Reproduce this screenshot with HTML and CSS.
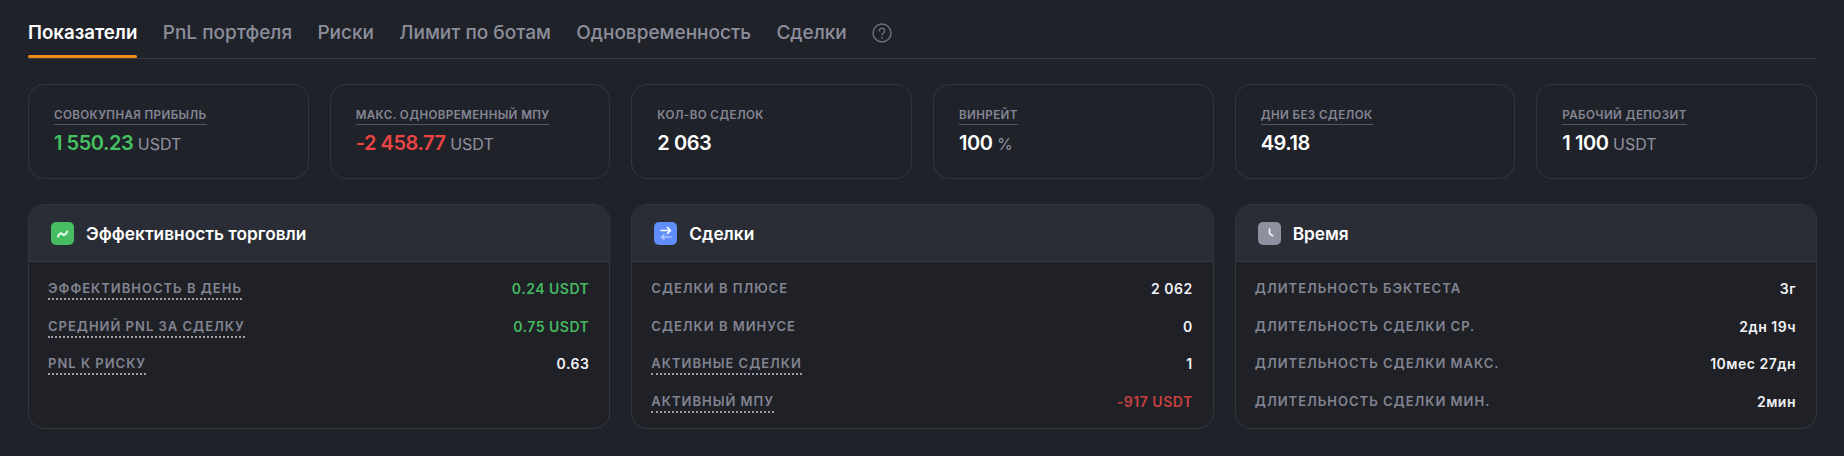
FILE: index.html
```html
<!DOCTYPE html>
<html lang="ru">
<head>
<meta charset="utf-8">
<title>Показатели</title>
<link rel="stylesheet" href="styles.css">
</head>
<body>
<main class="page">
  <nav class="tabs">
    <a class="tab active">Показатели</a>
    <a class="tab">PnL портфеля</a>
    <a class="tab">Риски</a>
    <a class="tab">Лимит по ботам</a>
    <a class="tab">Одновременность</a>
    <a class="tab">Сделки</a>
    <svg class="help" viewBox="0 0 20 20" width="20" height="20"><circle cx="10" cy="10" r="9" fill="none" stroke="#6f717c" stroke-width="1.4"/><path d="M7.4 7.8a2.6 2.6 0 1 1 4.2 2c-.9.7-1.6 1.1-1.6 2.3" fill="none" stroke="#6f717c" stroke-width="1.4" stroke-linecap="round"/><circle cx="10" cy="14.8" r=".9" fill="#6f717c"/></svg>
  </nav>

  <section class="kpis">
    <div class="kpi"><span class="kpi-label under">Совокупная прибыль</span><div class="kpi-value green">1 550.23 <small>USDT</small></div></div>
    <div class="kpi"><span class="kpi-label under">Макс. одновременный МПУ</span><div class="kpi-value red">-2 458.77 <small>USDT</small></div></div>
    <div class="kpi"><span class="kpi-label">Кол-во сделок</span><div class="kpi-value">2 063</div></div>
    <div class="kpi"><span class="kpi-label under">Винрейт</span><div class="kpi-value">100 <small>%</small></div></div>
    <div class="kpi"><span class="kpi-label under">Дни без сделок</span><div class="kpi-value">49.18</div></div>
    <div class="kpi"><span class="kpi-label under">Рабочий депозит</span><div class="kpi-value">1 100 <small>USDT</small></div></div>
  </section>

  <section class="panels">
    <article class="panel">
      <header class="panel-head">
        <span class="icon icon-green"><svg viewBox="0 0 23 23" width="23" height="23"><path d="M7 14.500c1.700-3.400 3-4 4.300-2.500s2.800 1.500 4.900-2.500" fill="none" stroke="#eafaec" stroke-width="2" stroke-linecap="round"/></svg></span>
        <h2>Эффективность торговли</h2>
      </header>
      <div class="rows">
        <div class="row"><span class="label dotted">Эффективность в день</span><span class="val green">0.24 USDT</span></div>
        <div class="row"><span class="label dotted">Средний PnL за сделку</span><span class="val green">0.75 USDT</span></div>
        <div class="row"><span class="label dotted">PnL к риску</span><span class="val">0.63</span></div>
      </div>
    </article>
    <article class="panel">
      <header class="panel-head">
        <span class="icon icon-blue"><svg viewBox="0 0 23 23" width="23" height="23"><path d="M7 8.500h9.500M13.500 5.500l3 3-3 3" fill="none" stroke="#fff" stroke-width="1.700" stroke-linecap="round" stroke-linejoin="round"/><path d="M17 15H7.500M10 12.800L7.500 15l2.500 2.200" fill="none" stroke="#a9c1fd" stroke-width="1.700" stroke-linecap="round" stroke-linejoin="round"/></svg></span>
        <h2>Сделки</h2>
      </header>
      <div class="rows">
        <div class="row"><span class="label">Сделки в плюсе</span><span class="val">2 062</span></div>
        <div class="row"><span class="label">Сделки в минусе</span><span class="val">0</span></div>
        <div class="row"><span class="label dotted">Активные сделки</span><span class="val">1</span></div>
        <div class="row"><span class="label dotted">Активный МПУ</span><span class="val red-soft">-917 USDT</span></div>
      </div>
    </article>
    <article class="panel">
      <header class="panel-head">
        <span class="icon icon-gray"><svg viewBox="0 0 23 23" width="23" height="23"><path d="M11.500 7v3.500c0 1.300 1.300 2.500 3.300 3.300" fill="none" stroke="#f2f2f5" stroke-width="1.700" stroke-linecap="round" stroke-linejoin="round"/></svg></span>
        <h2>Время</h2>
      </header>
      <div class="rows">
        <div class="row"><span class="label">Длительность бэктеста</span><span class="val">3г</span></div>
        <div class="row"><span class="label">Длительность сделки ср.</span><span class="val">2дн 19ч</span></div>
        <div class="row"><span class="label">Длительность сделки макс.</span><span class="val">10мес 27дн</span></div>
        <div class="row"><span class="label">Длительность сделки мин.</span><span class="val">2мин</span></div>
      </div>
    </article>
  </section>
</main>
</body>
</html>
```

FILE: styles.css
```css
* { box-sizing: border-box; }

html, body {
  margin: 0;
  height: 100%;
  background: #20222a;
}

body {
  font-family: Inter, "Noto Sans", sans-serif;
  color: #fff;
  overflow: hidden;
}

.page {
  padding: 0 27px 0 28px;
}

.tabs {
  display: flex;
  align-items: center;
  gap: 25.300px;
  height: 59px;
  padding-top: 8px;
  border-bottom: 1px solid #393b43;
}

.tab {
  position: relative;
  font-size: 19px;
  font-weight: 500;
  line-height: 50px;
  color: #8c8e9b;
  white-space: nowrap;
}

.tab.active {
  font-size: 18.700px;
  color: #fff;
  font-weight: 600;
}

.tab.active::after {
  content: "";
  position: absolute;
  left: 0;
  right: 0;
  bottom: 0;
  height: 3px;
  border-radius: 2px;
  background: #f08c1a;
}

.help {
  display: block;
}

.kpis {
  display: grid;
  grid-template-columns: repeat(6, 1fr);
  gap: 21px;
  margin-top: 25px;
}

.kpi {
  height: 95px;
  padding: 18px 25px 0;
  border: 1px solid #34363e;
  border-radius: 16px;
}

.kpi-label {
  display: inline-block;
  height: 19px;
  font-size: 11.600px;
  font-weight: 600;
  line-height: 18px;
  letter-spacing: 0.4px;
  text-transform: uppercase;
  color: #858794;
  white-space: nowrap;
}

.kpi-label.under {
  border-bottom: 1px solid #54565f;
}

.kpi-value {
  margin-top: 3px;
  font-size: 20px;
  font-weight: 600;
  line-height: 30px;
  letter-spacing: -0.45px;
  color: #fff;
  white-space: nowrap;
}

.kpi-value small {
  font-size: 16px;
  font-weight: 400;
  letter-spacing: 0;
  color: #9092a0;
}

.green { color: #45b85f; }
.red { color: #ea4444; }
.red-soft { color: #c9403f; }

.kpi-value.green { color: #45c162; }

.panels {
  display: grid;
  grid-template-columns: repeat(3, 1fr);
  gap: 21px;
  margin-top: 25px;
}

.panel {
  height: 225px;
  border: 1px solid #34363e;
  border-radius: 16px;
  overflow: hidden;
  background: #1f2127;
}

.panel-head {
  display: flex;
  align-items: center;
  gap: 12px;
  height: 57px;
  padding-left: 22px;
  background: #2a2d35;
  border-bottom: 1px solid #373a42;
}

.panel-head h2 {
  margin: 0;
  font-size: 17.300px;
  font-weight: 600;
  color: #fff;
}

.icon {
  display: block;
  width: 23px;
  height: 23px;
  border-radius: 5px;
}

.icon svg { display: block; }

.icon-green { background: #46bd63; }
.icon-blue { background: #5f8dfa; }
.icon-gray { background: #8e909f; }

.rows {
  display: flex;
  flex-direction: column;
  gap: 10.500px;
  padding: 13px 20px 0 19px;
}

.row {
  display: flex;
  justify-content: space-between;
  align-items: center;
  height: 27px;
}

.label {
  font-size: 13px;
  font-weight: 600;
  line-height: 17px;
  letter-spacing: 1px;
  text-transform: uppercase;
  color: #828491;
  white-space: nowrap;
}

.label.dotted {
  border-bottom: 2px dotted #9c9eab;
  padding-bottom: 1px;
  margin-top: 3px;
}

.val {
  font-size: 14px;
  font-weight: 600;
  letter-spacing: 0.5px;
  color: #f2f2f5;
  white-space: nowrap;
}

.val.green { color: #45b85f; }
.val.red-soft { color: #c9403f; }
```
